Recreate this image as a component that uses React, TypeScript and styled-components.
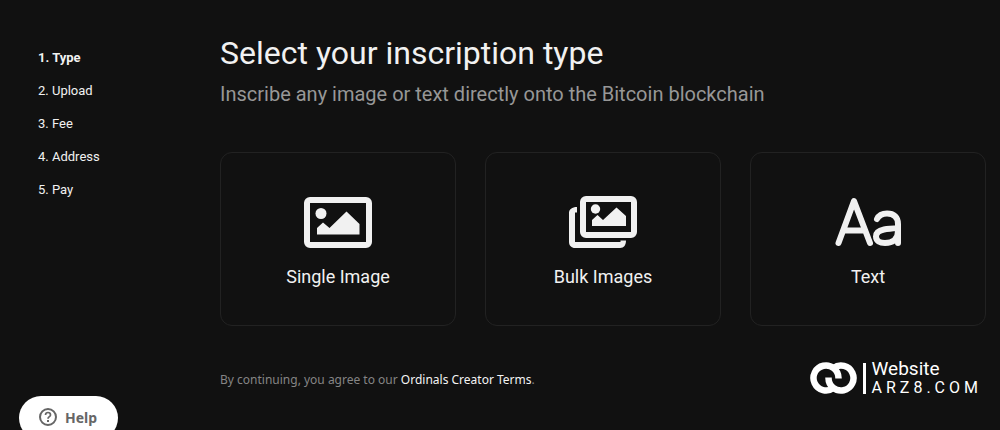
import React from "react";
import styled, { createGlobalStyle } from "styled-components";

const GlobalStyle = createGlobalStyle`
  *, *::before, *::after { box-sizing: border-box; }
  body {
    margin: 0;
    background: #111111;
    color: #f1f1f1;
    font-family: Roboto, "Liberation Sans", sans-serif;
  }
`;

const Page = styled.div`
  position: relative;
  display: grid;
  grid-template-columns: 182px minmax(0, 1fr);
  min-height: 100vh;
  padding: 32px 14px 0 38px;
  overflow: hidden;
`;

const StepList = styled.ol`
  display: flex;
  flex-direction: column;
  gap: 13px;
  margin: 0;
  padding: 16px 0 0;
  list-style: none;
`;

const Step = styled.li<{ $current?: boolean }>`
  font-size: 13px;
  line-height: 20px;
  font-weight: ${(p) => (p.$current ? 700 : 400)};
`;

const Main = styled.main`
  display: flex;
  flex-direction: column;
`;

const Title = styled.h1`
  margin: 0;
  font-size: 32px;
  line-height: 42px;
  font-weight: 400;
`;

const Subtitle = styled.p`
  margin: 6px 0 0;
  color: #979797;
  font-size: 20px;
  line-height: 28px;
`;

const Cards = styled.div`
  display: grid;
  grid-template-columns: repeat(3, minmax(0, 1fr));
  gap: 29px;
  margin-top: 44px;
`;

const Card = styled.button`
  display: flex;
  flex-direction: column;
  align-items: center;
  gap: 14px;
  padding: 42px 16px 36px;
  border: 1px solid #222222;
  border-radius: 12px;
  background: transparent;
  color: inherit;
  font: inherit;
  font-size: 18px;
  line-height: 24px;
  cursor: pointer;
`;

const CardIcon = styled.svg`
  width: 70px;
  height: 56px;
`;

const Footer = styled.footer`
  display: flex;
  justify-content: space-between;
  align-items: flex-start;
  margin-top: 33px;
  padding-right: 4px;
`;

const Terms = styled.p`
  margin: 11px 0 0;
  color: #858585;
  font-family: "Noto Sans", "Open Sans", sans-serif;
  font-size: 12px;
  line-height: 20px;
`;

const TermsLink = styled.a`
  color: #f4f4f4;
  text-decoration: none;
`;

const Brand = styled.div`
  display: flex;
  align-items: center;
  gap: 6px;
  color: #ffffff;
`;

const BrandMark = styled.svg`
  width: 47px;
  height: 32px;
`;

const BrandRule = styled.span`
  width: 3px;
  height: 31px;
  background: #ffffff;
`;

const BrandText = styled.div`
  display: flex;
  flex-direction: column;
  font-family: Roboto, sans-serif;
  line-height: 19px;
`;

const BrandName = styled.span`
  font-size: 19px;
`;

const BrandDomain = styled.span`
  font-size: 16px;
  letter-spacing: 4px;
`;

const HelpButton = styled.button`
  position: absolute;
  left: 19px;
  bottom: -10px;
  display: flex;
  align-items: center;
  gap: 8px;
  height: 44px;
  padding: 0 21px 2px 20px;
  border: 0;
  border-radius: 22px;
  background: #ffffff;
  color: #666666;
  font-family: "Noto Sans", sans-serif;
  font-size: 14px;
  font-weight: 700;
  cursor: pointer;
`;

const SingleImageIcon = () => (
  <CardIcon viewBox="0 0 70 56" fill="#f1f1f1" aria-hidden="true">
    <rect x="4" y="5" width="62" height="45" rx="3" fill="none" stroke="#f1f1f1" strokeWidth="6" />
    <circle cx="18" cy="18.5" r="5.5" />
    <path d="M14 39.5V33L20 27.5L26.500 33L43.500 16.500L56.500 29V39.500Z" />
  </CardIcon>
);

const BulkImagesIcon = () => (
  <CardIcon viewBox="0 0 70 56" fill="#f1f1f1" aria-hidden="true">
    <rect x="15" y="4" width="51" height="36" rx="3" fill="none" stroke="#f1f1f1" strokeWidth="6" />
    <circle cx="27.5" cy="14" r="4.7" />
    <path d="M24 31V25L29.500 20L35 25L48.500 12.500L58 21V31Z" />
    <path d="M9 12V17.500H7V47H52.500V45.500H58C58 50 56 53 52 53H7C3.500 53 1 50.500 1 47V18C1 14.500 4 12 9 12Z" />
  </CardIcon>
);

const TypefaceIcon = () => (
  <CardIcon
    viewBox="0 0 70 56"
    fill="none"
    stroke="#f1f1f1"
    strokeWidth="6"
    strokeLinecap="round"
    strokeLinejoin="round"
    aria-hidden="true"
  >
    <path d="M5.500 48L21 6L37 48M11 35.500H31" />
    <path d="M44 24C46 20 49 18.500 54 18.500C61 18.500 65 22 65 29V48M65 32.500C60 34 56 33.500 51 34.500C46 35.500 43 38 43 41.500C43 46 47 48 52 48C60 48 65 44 65 36" />
  </CardIcon>
);

const HelpIcon = () => (
  <svg width="18" height="18" viewBox="0 0 18 18" fill="none" stroke="currentColor" strokeWidth="2" aria-hidden="true">
    <circle cx="9" cy="9" r="8" />
    <path d="M6.500 7C6.500 5.500 7.500 4.500 9 4.500S11.500 5.500 11.500 6.900C11.500 8.500 9 8.700 9 10.700" strokeWidth="1.7" />
    <path d="M9 12V14" />
  </svg>
);

const steps = ["Type", "Upload", "Fee", "Address", "Pay"];

const types = [
  { label: "Single Image", Icon: SingleImageIcon },
  { label: "Bulk Images", Icon: BulkImagesIcon },
  { label: "Text", Icon: TypefaceIcon },
];

export default function App() {
  return (
    <>
      <GlobalStyle />
      <Page>
        <nav aria-label="Steps">
          <StepList>
            {steps.map((step, i) => (
              <Step key={step} $current={i === 0}>
                {i + 1}. {step}
              </Step>
            ))}
          </StepList>
        </nav>
        <Main>
          <Title>Select your inscription type</Title>
          <Subtitle>Inscribe any image or text directly onto the Bitcoin blockchain</Subtitle>
          <Cards>
            {types.map(({ label, Icon }) => (
              <Card key={label} type="button">
                <Icon />
                {label}
              </Card>
            ))}
          </Cards>
          <Footer>
            <Terms>
              By continuing, you agree to our <TermsLink href="#terms">Ordinals Creator Terms</TermsLink>.
            </Terms>
            <Brand>
              <BrandMark viewBox="0 0 47 32" fill="none" stroke="#ffffff" strokeWidth="6.5" aria-hidden="true">
                <path d="M28.500 16.500V16A12.500 12.500 0 1 0 23.500 26" />
                <path d="M18.500 15.500V16A12.500 12.500 0 1 0 23.500 6" />
              </BrandMark>
              <BrandRule />
              <BrandText>
                <BrandName>Website</BrandName>
                <BrandDomain>ARZ8.COM</BrandDomain>
              </BrandText>
            </Brand>
          </Footer>
        </Main>
        <HelpButton type="button">
          <HelpIcon />
          Help
        </HelpButton>
      </Page>
    </>
  );
}
